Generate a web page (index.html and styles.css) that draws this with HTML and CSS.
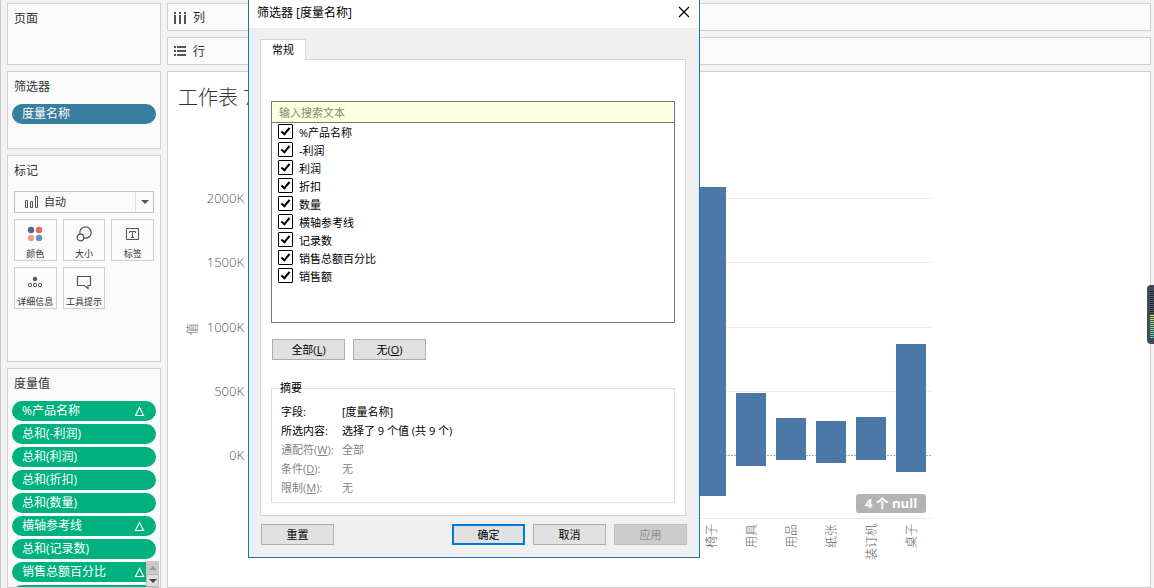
FILE: index.html
```html
<!DOCTYPE html>
<html lang="zh-CN">
<head>
<meta charset="utf-8">
<title>工作表 7</title>
<link rel="stylesheet" href="styles.css">
</head>
<body>
<div class="app">
  <aside class="sidebar">
    <section class="card card-pages"><h2 class="card-title">页面</h2></section>
    <section class="card card-filters">
      <h2 class="card-title">筛选器</h2>
      <div class="pill pill-blue">度量名称</div>
    </section>
    <section class="card card-marks">
      <h2 class="card-title">标记</h2>
      <div class="mark-type">
        <svg class="mark-icon" width="14" height="13" viewBox="0 0 14 13" fill="none" stroke="#555"><path d="M.5 4.500h2v7h-2zM5.500 5.500h2v6h-2zM10.500.5h2v11h-2z"/></svg>
        <select class="mark-select" aria-label="标记类型"><option>自动</option></select>
        <span class="mark-arrow"></span>
      </div>
      <div class="mark-grid">
        <button class="mark-button"><svg width="20" height="18" viewBox="0 0 20 18"><circle cx="6" cy="5" r="3.200" fill="#5b6690"/><circle cx="14" cy="5" r="3.200" fill="#e3696b"/><circle cx="6" cy="13" r="3.200" fill="#f5a07c"/><circle cx="14" cy="13" r="3.200" fill="#5c9ac6"/></svg>颜色</button>
        <button class="mark-button"><svg width="20" height="18" viewBox="0 0 20 18" fill="none" stroke="#555" stroke-width="1.200"><circle cx="11.500" cy="7.500" r="5.700"/><circle cx="6.500" cy="12.500" r="3.300" fill="#fafafa"/></svg>大小</button>
        <button class="mark-button"><svg width="20" height="18" viewBox="0 0 20 18" fill="none" stroke="#555"><path d="M3.500 3.500h12v11h-12zM6.500 8V6.500h6V8M9.500 6.500v5.500M8 12.500h3"/></svg>标签</button>
        <button class="mark-button"><svg width="20" height="18" viewBox="0 0 20 18" fill="none" stroke="#555"><circle cx="10" cy="6" r="1.800" fill="#555"/><circle cx="5" cy="12" r="1.700"/><circle cx="10" cy="12" r="1.700"/><circle cx="15" cy="12" r="1.700"/></svg>详细信息</button>
        <button class="mark-button"><svg width="20" height="18" viewBox="0 0 20 18" fill="none" stroke="#555" stroke-width="1.200"><path d="M3.500 3.500h13v9h-2.500v3l-3.500-3h-7z"/></svg>工具提示</button>
      </div>
    </section>
    <section class="card card-measures">
      <h2 class="card-title">度量值</h2>
      <div class="pill-list">
        <div class="pill">%产品名称<svg class="delta" width="11" height="11" viewBox="0 0 11 11"><path d="M5.500 1.500 9.500 9.500h-8z"/></svg></div>
        <div class="pill">总和(-利润)</div>
        <div class="pill">总和(利润)</div>
        <div class="pill">总和(折扣)</div>
        <div class="pill">总和(数量)</div>
        <div class="pill">横轴参考线<svg class="delta" width="11" height="11" viewBox="0 0 11 11"><path d="M5.500 1.500 9.500 9.500h-8z"/></svg></div>
        <div class="pill">总和(记录数)</div>
        <div class="pill">销售总额百分比<svg class="delta" width="11" height="11" viewBox="0 0 11 11"><path d="M5.500 1.500 9.500 9.500h-8z"/></svg></div>
        <div class="pill"></div>
      </div>
      <div class="scroller"><span class="scroll-up"></span><span class="scroll-down"></span></div>
    </section>
  </aside>

  <main class="workspace">
    <section class="shelf">
      <svg width="14" height="14" viewBox="0 0 14 14" fill="#555"><path d="M1 1h2v2H1zM6 1h2v2H6zM11 1h2v2h-2zM1 4h2v9H1zM6 4h2v9H6zM11 4h2v9h-2z"/></svg>列
    </section>
    <section class="shelf">
      <svg width="14" height="14" viewBox="0 0 14 14" fill="#555"><path d="M1 1h2v2H1zM1 5h2v2H1zM1 9h2v2H1zM4 1h9v2H4zM4 5h9v2H4zM4 9h9v2H4z"/></svg>行
    </section>
    <section class="sheet">
      <h1 class="sheet-title">工作表 7</h1>
      <svg class="chart" width="764" height="440" viewBox="0 0 764 440">
        <g class="grid">
          <path d="M83 78.500h681M83 142.500h681M83 207.500h681M83 271.500h681M83 398.500h681"/>
          <path class="zero" d="M83 335.500h681"/>
        </g>
        <g class="bars">
          <rect x="528" y="67" width="30" height="309"/>
          <rect x="568" y="273" width="30" height="73"/>
          <rect x="608" y="298" width="30" height="42"/>
          <rect x="648" y="301" width="30" height="42"/>
          <rect x="688" y="297" width="30" height="43"/>
          <rect x="728" y="224" width="30" height="128"/>
        </g>
        <g class="axis" text-anchor="end">
          <text x="76" y="83">2000K</text><text x="76" y="147">1500K</text><text x="76" y="212">1000K</text><text x="76" y="276">500K</text><text x="76" y="340">0K</text>
        </g>
        <g class="labels" text-anchor="end">
          <text transform="translate(548 404) rotate(-90)">椅子</text>
          <text transform="translate(588 404) rotate(-90)">用具</text>
          <text transform="translate(628 404) rotate(-90)">用品</text>
          <text transform="translate(668 404) rotate(-90)">纸张</text>
          <text transform="translate(708 404) rotate(-90)">装订机</text>
          <text transform="translate(748 404) rotate(-90)">桌子</text>
          <text transform="translate(29 203) rotate(-90)">值</text>
        </g>
        <rect x="688" y="374" width="70" height="19" rx="3" fill="#b3b3b3"/>
        <text class="null-label" x="723" y="388" text-anchor="middle">4 个 null</text>
      </svg>
    </section>
  </main>
</div>

<div class="dialog" role="dialog" aria-labelledby="dialog-title">
  <header class="dialog-bar">
    <h2 class="dialog-title" id="dialog-title">筛选器 [度量名称]</h2>
    <button class="close" aria-label="关闭"><svg width="12" height="12" viewBox="0 0 12 12" stroke="#000" stroke-width="1.200"><path d="M1 1l10 10M11 1 1 11"/></svg></button>
  </header>
  <div class="dialog-body">
    <button class="tab" role="tab">常规</button>
    <div class="panel">
      <div class="list-box">
        <input class="search" type="text" placeholder="输入搜索文本" aria-label="输入搜索文本">
        <div class="options">
          <label class="option"><input type="checkbox" checked>%产品名称</label>
          <label class="option"><input type="checkbox" checked>-利润</label>
          <label class="option"><input type="checkbox" checked>利润</label>
          <label class="option"><input type="checkbox" checked>折扣</label>
          <label class="option"><input type="checkbox" checked>数量</label>
          <label class="option"><input type="checkbox" checked>横轴参考线</label>
          <label class="option"><input type="checkbox" checked>记录数</label>
          <label class="option"><input type="checkbox" checked>销售总额百分比</label>
          <label class="option"><input type="checkbox" checked>销售额</label>
        </div>
      </div>
      <div class="button-row">
        <button class="button">全部(<u>L</u>)</button>
        <button class="button">无(<u>O</u>)</button>
      </div>
      <fieldset class="summary">
        <legend>摘要</legend>
        <dl class="facts">
          <dt>字段:</dt><dd>[度量名称]</dd>
          <dt>所选内容:</dt><dd>选择了 9 个值 (共 9 个)</dd>
          <dt class="muted">通配符(<u>W</u>):</dt><dd class="muted">全部</dd>
          <dt class="muted">条件(<u>D</u>):</dt><dd class="muted">无</dd>
          <dt class="muted">限制(<u>M</u>):</dt><dd class="muted">无</dd>
        </dl>
      </fieldset>
    </div>
    <footer class="button-row dialog-footer">
      <button class="button reset">重置</button>
      <button class="button primary">确定</button>
      <button class="button">取消</button>
      <button class="button" disabled>应用</button>
    </footer>
  </div>
</div>

<div class="meter"><span class="meter-idle"></span><span class="meter-live"></span></div>
</body>
</html>
```
FILE: styles.css
```css
* { box-sizing: border-box; }
body {
  margin: 0;
  height: 100vh;
  overflow: hidden;
  position: relative;
  background: #f3f3f3;
  color: #333;
  font: 12px/20px "Open Sans", "Noto Sans CJK SC", sans-serif;
}
h1, h2, dl, dd { margin: 0; font-weight: 400; }
button, input, select { font: inherit; color: inherit; }
.app {
  display: flex;
  gap: 6px;
  height: 100%;
  padding: 3px 3px 0 6px;
  border-left: 1px solid #c8c8c8;
}
.sidebar { flex: 0 0 154px; display: flex; flex-direction: column; gap: 6px; }
.card { flex: none; padding: 5px 4px 4px; background: #fafafa; border: 1px solid #cfcfcf; }
.card-pages { height: 62px; }
.card-filters { height: 78px; }
.card-marks { height: 207px; }
.card-measures { flex: 1 1 0; min-height: 0; overflow: hidden; position: relative; }
.card-title { padding-left: 2px; font-size: 12px; line-height: 20px; }
.pill {
  display: flex;
  align-items: center;
  justify-content: space-between;
  height: 20px;
  flex: none;
  padding: 0 11px 0 10px;
  border-radius: 10px;
  background: #00b180;
  color: #fff;
}
.pill-blue { margin-top: 7px; background: #377e9f; }
.pill-list { display: flex; flex-direction: column; gap: 3px; margin-top: 7px; }
.delta { fill: none; stroke: #fff; stroke-width: 1.2; }
.scroller { position: absolute; right: 1px; bottom: 0; width: 13px; display: grid; }
.scroll-up, .scroll-down { height: 13px; display: grid; place-items: center; background: #c9c9c9; }
.scroll-down { background: #dedede; border: 1px solid #b5b5b5; }
.scroll-up::before, .scroll-down::before { content: ""; border: 4px solid transparent; border-top-width: 0; border-bottom: 4px solid #999; }
.scroll-down::before { border-top: 4px solid #444; border-bottom-width: 0; }

.mark-type { position: relative; margin: 10px 2px 6px; }
.mark-select {
  display: block;
  width: 100%;
  height: 22px;
  padding: 0 0 0 29px;
  appearance: none;
  border: 1px solid #bfbfbf;
  border-radius: 0;
  background: #fafafa;
  font-size: 11px;
}
.mark-icon { position: absolute; left: 11px; top: 5px; }
.mark-arrow {
  position: absolute;
  right: 1px;
  top: 1px;
  width: 18px;
  height: 20px;
  display: grid;
  place-items: center;
  border-left: 1px solid #ddd;
  pointer-events: none;
}
.mark-arrow::before { content: ""; border: 4px solid transparent; border-top-color: #555; border-bottom-width: 0; }
.mark-grid { display: grid; grid-template-columns: repeat(3, 1fr); gap: 6px; margin: 0 2px; }
.mark-button {
  display: flex;
  flex-direction: column;
  align-items: center;
  min-width: 0;
  height: 42px;
  padding: 5px 0 0;
  border: 1px solid #cfcfcf;
  background: #fafafa;
  font-size: 9px;
  line-height: 22px;
  white-space: nowrap;
}
.mark-button svg { flex: none; }

.workspace { flex: 1; min-width: 0; display: flex; flex-direction: column; gap: 6px; }
.shelf {
  flex: none;
  display: flex;
  align-items: center;
  gap: 6px;
  height: 28px;
  padding: 1px 5px 0;
  border: 1px solid #cfcfcf;
  background: #fafafa;
}
.sheet { flex: 1; min-height: 0; overflow: hidden; border: 1px solid #cfcfcf; background: #fff; }
.sheet-title { padding: 10px 10px 0; font-size: 20px; line-height: 32px; font-weight: 300; height: 48px; }
.chart { display: block; }
.grid path { stroke: #ececec; }
.grid .zero { stroke: #aaa; stroke-dasharray: 2 1; }
.bars { fill: #4c78a8; }
.axis { fill: #555; font-size: 13px; font-weight: 300; }
.labels { fill: #666; font-size: 12px; font-weight: 300; }
.null-label { fill: #fff; font-size: 13px; font-weight: 700; }

.dialog {
  position: absolute;
  left: 248px;
  top: 0;
  width: 452px;
  border: 1px solid #2d6d9f;
  border-top: 0;
  background: #f0f0f0;
  color: #000;
  font-size: 11px;
}
.dialog-bar { display: flex; justify-content: space-between; height: 28px; padding: 0 8px; background: #fff; }
.dialog-title { font-size: 12px; line-height: 26px; }
.close { width: 14px; height: 24px; padding: 0; border: 0; background: none; display: grid; place-items: center; }
.dialog-body { padding: 11px 11px 12px 6px; border: solid #e2f2fc; border-width: 0 2px 0 5px; }
.tab {
  display: block;
  position: relative;
  width: 46px;
  height: 21px;
  margin-bottom: -1px;
  padding: 0;
  border: 1px solid #d5d5d5;
  border-bottom: 0;
  background: #fff;
  font-size: 11px;
}
.panel { padding: 41px 10px 12px; border: 1px solid #d5d5d5; background: #fff; }
.list-box { height: 222px; border: 1px solid #777; }
.search {
  display: block;
  width: 100%;
  height: 21px;
  padding: 0 7px;
  border: 0;
  border-bottom: 1px solid #777;
  background: #ffffe1;
  outline: 0;
}
.search::placeholder { color: #888870; }
.option { display: flex; align-items: flex-start; gap: 6px; height: 18px; padding: 1px 0 0 6px; line-height: 18px; }
.option input {
  appearance: none;
  display: grid;
  place-items: center;
  width: 15px;
  height: 15px;
  margin: 0;
  border: 1px solid #000;
  border-radius: 1px;
  background: #fff;
}
.option input:checked::before {
  content: "";
  box-sizing: border-box;
  width: 5px;
  height: 9px;
  margin-bottom: 2px;
  border: solid #000;
  border-width: 0 2px 2px 0;
  transform: rotate(40deg);
}
.button-row { display: flex; gap: 8px; margin: 16px 1px 0; }
.button { width: 73px; height: 21px; padding: 0; border: 1px solid #adadad; background: #e1e1e1; line-height: 18px; }
.button:disabled { border-color: #bfbfbf; background: #ccc; color: #888; }
.primary { border: 2px solid #0078d7; line-height: 16px; }
.reset { margin-right: auto; }
.dialog-footer { margin: 8px -1px 0 1px; }
.summary { margin: 18px 0 0; padding: 4px 9px 5px; border: 1px solid #dcdcdc; }
.summary legend { padding: 0 1px; margin-left: -2px; }
.facts { display: grid; grid-template-columns: 61px 1fr; line-height: 19px; }
.muted { color: #848484; }

.meter {
  position: absolute;
  right: 0;
  top: 285px;
  width: 7px;
  height: 59px;
  padding: 6px 0 6px 3px;
  border-radius: 4px 0 0 4px;
  background: #44495a;
}
.meter span { display: block; height: 24px; }
.meter-idle { background: repeating-linear-gradient(#20232c 0 1px, #555b6c 1px 2px); }
.meter-live { background: repeating-linear-gradient(#44495a00 0 1px, #44495a 1px 2px), linear-gradient(#e0e040, #30d8c8); }
```
